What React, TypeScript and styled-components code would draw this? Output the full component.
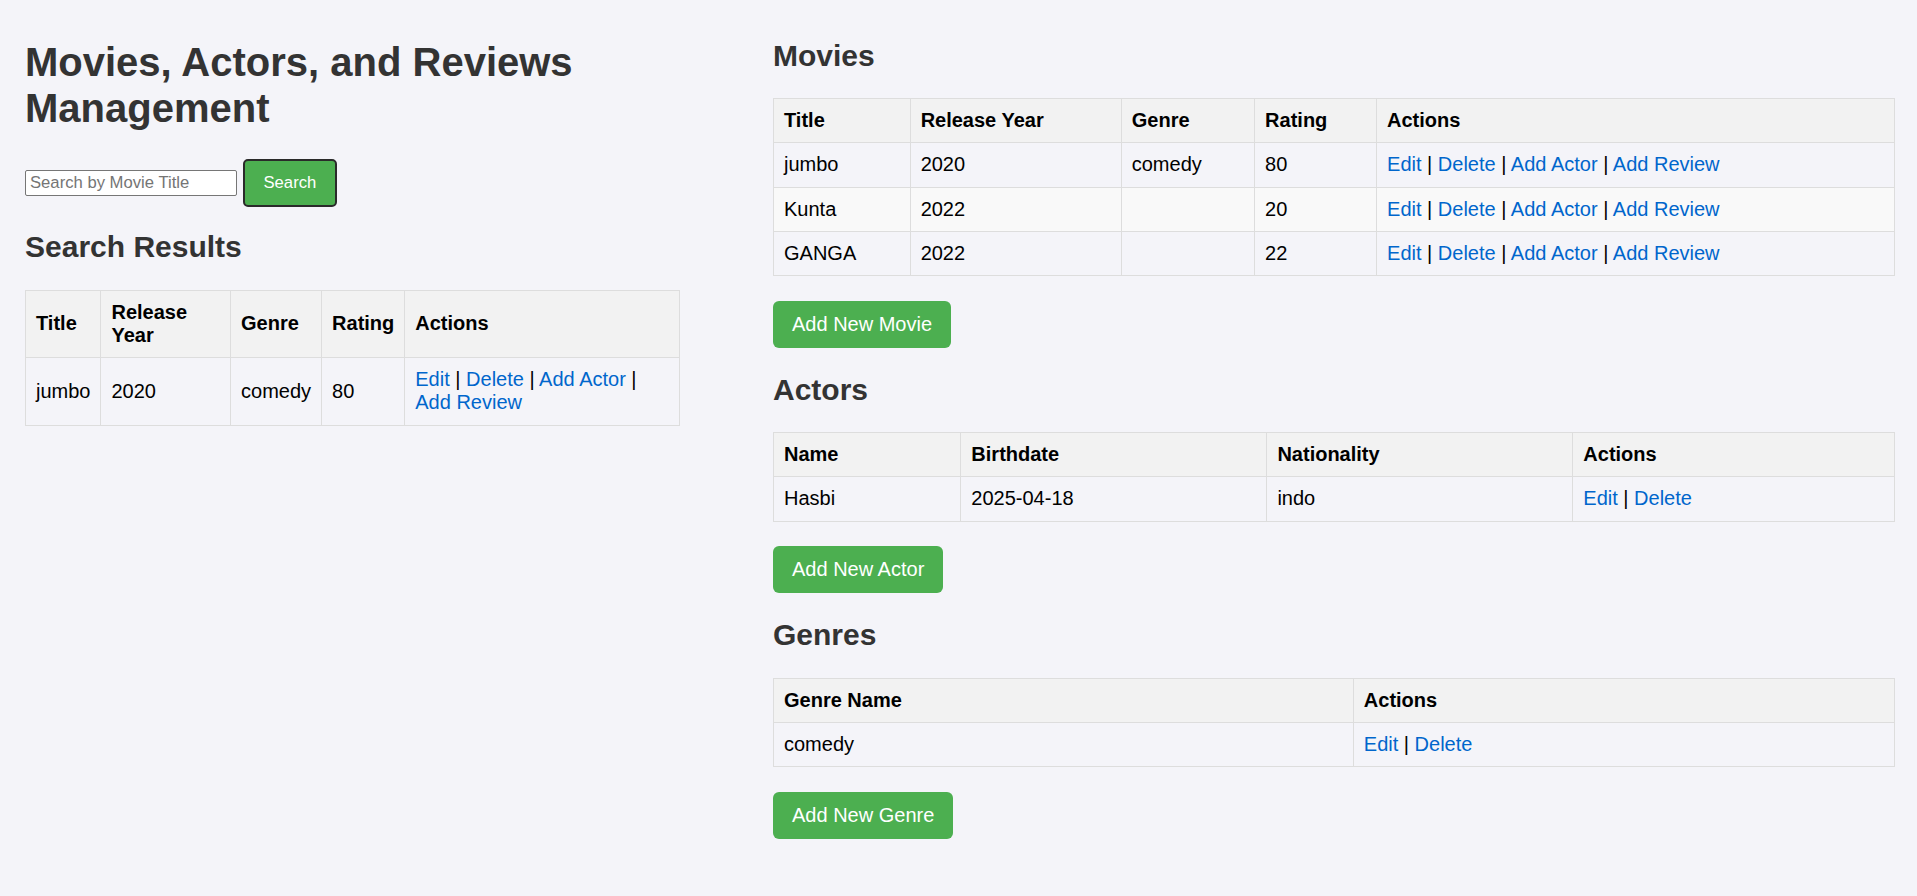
import React, { Fragment } from "react";
import styled, { createGlobalStyle } from "styled-components";

const GlobalStyle = createGlobalStyle`
  html, body {
    margin: 0;
    padding: 0;
  }
  body {
    background: #f4f4f9;
    color: #000;
    font-family: "Liberation Sans", Arial, sans-serif;
    font-size: 20px;
  }
`;

const Page = styled.div`
  display: flex;
  justify-content: space-between;
  align-items: flex-start;
  padding: 11px 22px 30px 25px;
`;

const LeftColumn = styled.section`
  width: 35%;
`;

const RightColumn = styled.section`
  width: 60%;
  display: flex;
  flex-direction: column;
  align-items: flex-start;
`;

const Title = styled.h1`
  font-size: 40px;
  line-height: 46px;
  font-weight: bold;
  color: #333;
  margin: 28px 0 0;
`;

const SectionTitle = styled.h2<{ $mt?: number }>`
  font-size: 30px;
  line-height: 34.5px;
  font-weight: bold;
  color: #333;
  margin: ${(p) => (p.$mt ?? 25)}px 0 25px;
`;

const SearchForm = styled.form`
  display: flex;
  align-items: center;
  gap: 6px;
  margin-top: 28px;
`;

const SearchInput = styled.input`
  width: 212px;
  height: 26px;
  box-sizing: border-box;
  border: 1px solid #767676;
  border-radius: 2px;
  padding: 0 4px;
  background: #fff;
  font-family: "Liberation Sans", Arial, sans-serif;
  font-size: 16.67px;
  color: #000;
  &::placeholder {
    color: #757575;
  }
`;

const SearchButton = styled.button`
  height: 48px;
  padding: 0 18.5px;
  background: #4caf50;
  color: #fff;
  border: 2px solid #2a2a2a;
  border-radius: 5px;
  font-family: "Liberation Sans", Arial, sans-serif;
  font-size: 16.67px;
  cursor: pointer;
`;

const Table = styled.table`
  width: 100%;
  border-collapse: collapse;
  margin: 0 0 24.5px;
  font-size: 20px;
`;

const HeadCell = styled.th`
  padding: 10px;
  border: 1px solid #ddd;
  background: #f2f2f2;
  text-align: left;
  font-weight: bold;
  line-height: 23.25px;
`;

const Cell = styled.td`
  padding: 10px;
  border: 1px solid #ddd;
  text-align: left;
  line-height: 23.25px;
`;

const Row = styled.tr`
  &:nth-child(even) {
    background: #f9f9f9;
  }
`;

const ActionLink = styled.a`
  color: #0066cc;
  text-decoration: none;
`;

const AddButton = styled.button`
  background: #4caf50;
  color: #fff;
  border: none;
  border-radius: 6px;
  padding: 12px 19px;
  font-family: "Liberation Sans", Arial, sans-serif;
  font-size: 20px;
  line-height: 23px;
  cursor: pointer;
`;

type Movie = { title: string; year: string; genre: string; rating: string };

const movies: Movie[] = [
  { title: "jumbo", year: "2020", genre: "comedy", rating: "80" },
  { title: "Kunta", year: "2022", genre: "", rating: "20" },
  { title: "GANGA", year: "2022", genre: "", rating: "22" },
];

const movieActions = ["Edit", "Delete", "Add Actor", "Add Review"];
const basicActions = ["Edit", "Delete"];

const Actions = ({ items }: { items: string[] }) => (
  <>
    {items.map((a, i) => (
      <Fragment key={a}>
        {i > 0 && " | "}
        <ActionLink href="#">{a}</ActionLink>
      </Fragment>
    ))}
  </>
);

const MovieTable = ({ rows }: { rows: Movie[] }) => (
  <Table>
    <thead>
      <tr>
        <HeadCell>Title</HeadCell>
        <HeadCell>Release Year</HeadCell>
        <HeadCell>Genre</HeadCell>
        <HeadCell>Rating</HeadCell>
        <HeadCell>Actions</HeadCell>
      </tr>
    </thead>
    <tbody>
      {rows.map((m) => (
        <Row key={m.title}>
          <Cell>{m.title}</Cell>
          <Cell>{m.year}</Cell>
          <Cell>{m.genre}</Cell>
          <Cell>{m.rating}</Cell>
          <Cell>
            <Actions items={movieActions} />
          </Cell>
        </Row>
      ))}
    </tbody>
  </Table>
);

export default function App() {
  return (
    <>
      <GlobalStyle />
      <Page>
        <LeftColumn>
          <Title>Movies, Actors, and Reviews Management</Title>
          <SearchForm onSubmit={(e) => e.preventDefault()}>
            <SearchInput type="text" placeholder="Search by Movie Title" />
            <SearchButton type="submit">Search</SearchButton>
          </SearchForm>
          <SectionTitle $mt={23}>Search Results</SectionTitle>
          <MovieTable rows={movies.slice(0, 1)} />
        </LeftColumn>

        <RightColumn>
          <SectionTitle $mt={27.5}>Movies</SectionTitle>
          <MovieTable rows={movies} />
          <AddButton>Add New Movie</AddButton>

          <SectionTitle>Actors</SectionTitle>
          <Table>
            <thead>
              <tr>
                <HeadCell>Name</HeadCell>
                <HeadCell>Birthdate</HeadCell>
                <HeadCell>Nationality</HeadCell>
                <HeadCell>Actions</HeadCell>
              </tr>
            </thead>
            <tbody>
              <Row>
                <Cell>Hasbi</Cell>
                <Cell>2025-04-18</Cell>
                <Cell>indo</Cell>
                <Cell>
                  <Actions items={basicActions} />
                </Cell>
              </Row>
            </tbody>
          </Table>
          <AddButton>Add New Actor</AddButton>

          <SectionTitle>Genres</SectionTitle>
          <Table>
            <thead>
              <tr>
                <HeadCell>Genre Name</HeadCell>
                <HeadCell>Actions</HeadCell>
              </tr>
            </thead>
            <tbody>
              <Row>
                <Cell>comedy</Cell>
                <Cell>
                  <Actions items={basicActions} />
                </Cell>
              </Row>
            </tbody>
          </Table>
          <AddButton>Add New Genre</AddButton>
        </RightColumn>
      </Page>
    </>
  );
}
